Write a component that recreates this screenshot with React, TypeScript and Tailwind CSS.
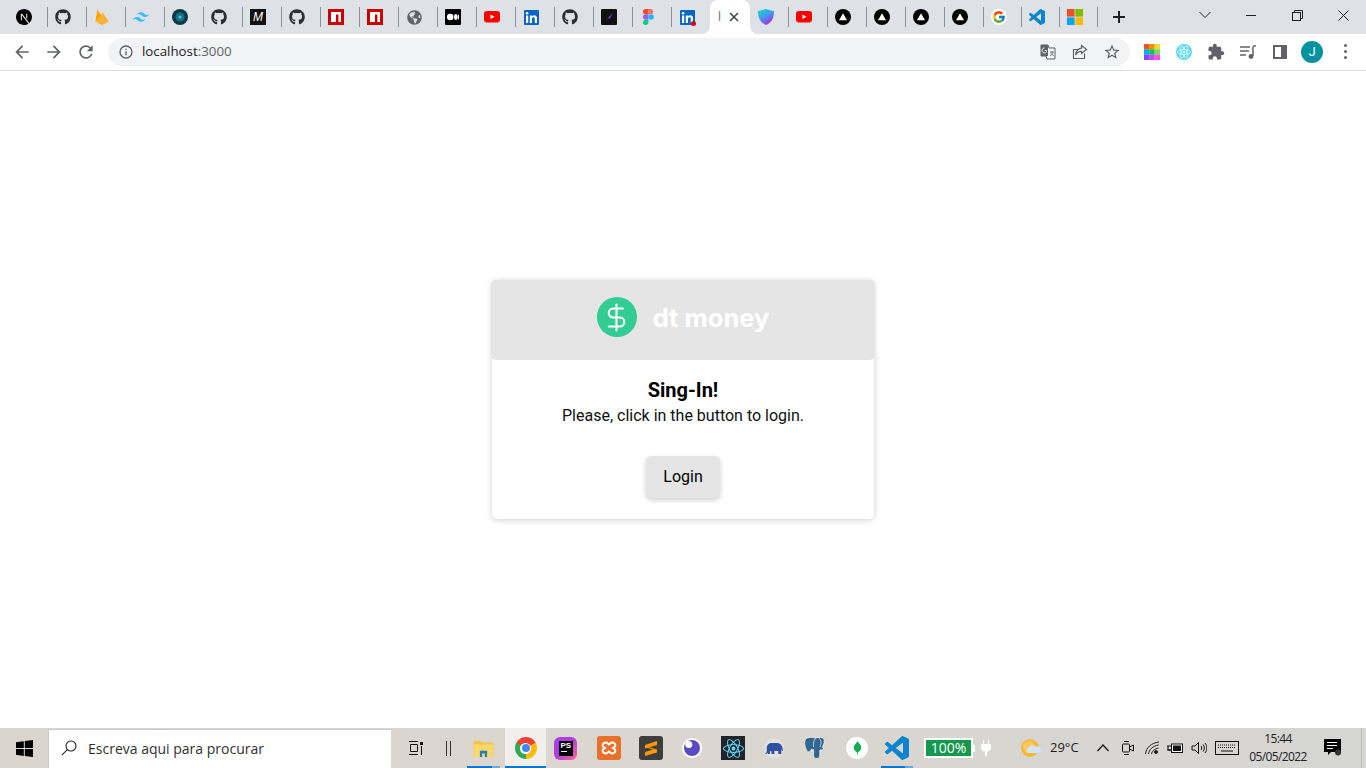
import React from "react";
import { FaGithub, FaGlobeAmericas } from "react-icons/fa";
import { SiNextdotjs, SiTailwindcss, SiReact } from "react-icons/si";
import { FcGoogle } from "react-icons/fc";

const VS = ({ size = 16 }: { size?: number }) => (
  <svg width={size} height={size} viewBox="0 0 24 24" fill="#0d84d0">
    <path d="M23.15 2.587L18.21.21a1.494 1.494 0 0 0-1.705.29l-9.46 8.63-4.12-3.128a.999.999 0 0 0-1.276.057L.327 7.261A1 1 0 0 0 .326 8.74L3.899 12 .326 15.26a1 1 0 0 0 .001 1.479L1.65 17.94a.999.999 0 0 0 1.276.057l4.12-3.128 9.46 8.63a1.492 1.492 0 0 0 1.704.29l4.942-2.377A1.5 1.5 0 0 0 24 20.06V3.939a1.5 1.5 0 0 0-.85-1.352zm-5.146 14.861L10.826 12l7.178-5.448v10.896z" />
  </svg>
);
const Gh = () => <FaGithub size={16} color="#2b2f33" />;
const Npm = () => (
  <svg width="16" height="16" viewBox="0 0 16 16">
    <rect width="16" height="16" fill="#cb0000" />
    <path d="M3 3h10v10h-2.6V5.6H8V13H3z" fill="#fff" />
  </svg>
);
const Tri = () => (
  <svg width="16" height="16" viewBox="0 0 16 16">
    <circle cx="8" cy="8" r="8" fill="#000" />
    <path d="M8 4.2l4 7H4z" fill="#fff" />
  </svg>
);
const Yt = () => (
  <svg width="16" height="12" viewBox="0 0 16 12">
    <rect width="16" height="11.5" rx="3" fill="#f00" />
    <path d="M6.5 3.6l4 2.2-4 2.2z" fill="#fff" />
  </svg>
);
const Li = ({ dot }: { dot?: boolean }) => (
  <span className="relative flex h-4 w-4 items-center justify-center">
    <svg width="15" height="15" viewBox="0 0 15 15">
      <rect width="15" height="15" rx="1" fill="#0a66c2" />
      <rect x="2" y="5.5" width="2.2" height="7.5" fill="#fff" />
      <circle cx="3.1" cy="3.3" r="1.3" fill="#fff" />
      <path d="M5.8 5.5h2.1v1c.5-.8 1.2-1.2 2.2-1.2 1.9 0 2.9 1.1 2.9 3.2V13h-2.2V8.9c0-1-.4-1.6-1.3-1.6S8 8 8 8.9V13H5.8z" fill="#fff" />
    </svg>
    {dot && <span className="absolute right-[-1px] bottom-[-1px] h-[5px] w-[5px] rounded-full bg-[#d9071c]" />}
  </span>
);
const favicons: React.ReactNode[] = [
  <SiNextdotjs size={16} color="#000" />,
  <Gh />,
  <svg width="14" height="16" viewBox="0 0 14 16">
    <path d="M0.500 12.500L2.500 0.500 6 6.500 7.500 3.500 13.500 12.500 7 16z" fill="#ffca28" />
    <path d="M0.500 12.500L2.500 0.500 6 6.500z" fill="#ffa000" />
    <path d="M7.500 3.500L13.500 12.500 7 16 0.500 12.500 6 6.500z" fill="#f9b233" />
  </svg>,
  <SiTailwindcss size={16} color="#38bdf8" />,
  <svg width="16" height="16" viewBox="0 0 16 16">
    <circle cx="8" cy="8" r="8" fill="#0b3a46" />
    <circle cx="8" cy="8" r="4.5" fill="#18708a" />
    <circle cx="8" cy="8" r="1.5" fill="#53c1de" />
  </svg>,
  <Gh />,
  <span className="flex h-4 w-4 items-center justify-center bg-[#111] font-['Liberation_Sans',sans-serif] text-[12px] italic leading-none text-white">M</span>,
  <Gh />,
  <Npm />,
  <Npm />,
  <FaGlobeAmericas size={15} color="#5f6368" />,
  <svg width="16" height="16" viewBox="0 0 16 16">
    <rect width="16" height="16" rx="1" fill="#000" />
    <circle cx="5.2" cy="8" r="3.3" fill="#fff" />
    <ellipse cx="10.8" cy="8" rx="1.7" ry="3" fill="#fff" />
    <ellipse cx="13.4" cy="8" rx=".7" ry="2.7" fill="#fff" />
  </svg>,
  <Yt />,
  <Li />,
  <Gh />,
  <svg width="16" height="16" viewBox="0 0 16 16">
    <rect width="16" height="16" rx="1" fill="#111" />
    <path d="M4.500 12L11.500 4 9.300 9 6.900 9.800z" fill="#7c4fe0" />
  </svg>,
  <svg width="11" height="16" viewBox="0 0 11 16">
    <path d="M0 2.7A2.7 2.7 0 0 1 2.7 0h2.7v5.3H2.7A2.7 2.7 0 0 1 0 2.7z" fill="#f24e1e" />
    <path d="M5.4 0h2.7a2.7 2.7 0 0 1 0 5.3H5.4z" fill="#ff7262" />
    <path d="M0 8a2.7 2.7 0 0 1 2.7-2.7h2.7v5.4H2.7A2.7 2.7 0 0 1 0 8z" fill="#a259ff" />
    <circle cx="8.1" cy="8" r="2.7" fill="#1abcfe" />
    <path d="M0 13.3a2.7 2.7 0 0 1 2.7-2.6h2.7v2.6a2.7 2.7 0 0 1-5.4 0z" fill="#0acf83" />
  </svg>,
  <Li dot />,
];
const after: { n: React.ReactNode; w: number }[] = [
  {
    n: (
      <svg width="16" height="16" viewBox="0 0 16 16">
        <defs>
          <linearGradient id="sh" x1="0" y1="0" x2=".6" y2="1">
            <stop offset="0" stopColor="#20dba0" />
            <stop offset=".45" stopColor="#35a8f0" />
            <stop offset="1" stopColor="#a82de0" />
          </linearGradient>
        </defs>
        <path d="M8 0l8 2.2c0 6-1.6 11-8 13.8C1.6 13.2 0 8.2 0 2.2z" fill="url(#sh)" />
      </svg>
    ),
    w: 38,
  },
  { n: <Yt />, w: 39 },
  { n: <Tri />, w: 39 },
  { n: <Tri />, w: 39 },
  { n: <Tri />, w: 39 },
  { n: <Tri />, w: 39 },
  {
    n: (
      <span className="flex h-4 w-4 items-center justify-center rounded-full bg-white">
        <FcGoogle size={14} />
      </span>
    ),
    w: 38,
  },
  { n: <VS size={16} />, w: 38 },
  {
    n: (
      <svg width="16" height="16" viewBox="0 0 16 16">
        <rect width="7.6" height="7.6" fill="#f25022" />
        <rect x="8.4" width="7.6" height="7.6" fill="#7fba00" />
        <rect y="8.4" width="7.6" height="7.6" fill="#00a4ef" />
        <rect x="8.4" y="8.4" width="7.6" height="7.6" fill="#ffb900" />
      </svg>
    ),
    w: 38,
  },
];

const Tab = ({ children, w = 39 }: { children: React.ReactNode; w?: number }) => (
  <div className="flex h-[34px] shrink-0 items-center pl-2" style={{ width: w }}>
    <span className="flex h-4 w-4 items-center justify-center">{children}</span>
    <span className="mr-[-1px] ml-auto h-5 w-px bg-[#8e9297]" />
  </div>
);

const Mat = ({ d, size = 20, color = "#5f6368" }: { d: string; size?: number; color?: string }) => (
  <svg width={size} height={size} viewBox="0 0 24 24" fill={color}>
    <path d={d} />
  </svg>
);

const Slot = ({ w, children }: { w: number; children: React.ReactNode }) => (
  <div className="flex shrink-0 items-center justify-center" style={{ width: w }}>
    {children}
  </div>
);

const TB = ({ w, line, active, children }: { w: number; line?: boolean; active?: boolean; children: React.ReactNode }) => (
  <div className={`relative flex h-10 shrink-0 items-center justify-center ${active ? "bg-[#f1efec]" : ""}`} style={{ width: w }}>
    {children}
    {line && (
      <span className="absolute right-0 bottom-0 left-0 flex h-[2px]">
        <span className="flex-1 bg-[#0078d4]" />
        {!active && <span className="w-2 bg-[#6fa8d8]" />}
      </span>
    )}
  </div>
);

export default function App() {
  return (
    <div className="flex h-[768px] w-[1366px] flex-col overflow-hidden bg-white font-['Roboto',sans-serif]">
      {/* tab strip */}
      <div className="flex h-[34px] shrink-0 bg-[#dee1e6] pl-2">
        {favicons.map((f, i) => (
          <Tab key={i}>{f}</Tab>
        ))}
        <div className="relative flex h-[34px] w-10 shrink-0 items-center rounded-t-lg bg-white pl-2">
          <span className="w-[3px] font-['Open_Sans',sans-serif] text-[12px] leading-none text-[#5f6368]">l</span>
          <svg className="ml-[8px]" width="10" height="10" viewBox="0 0 10 10" stroke="#3c4043" strokeWidth="1.5">
            <path d="M1 1l8 8M9 1l-8 8" />
          </svg>
          <svg className="absolute bottom-0 left-[-8px]" width="8" height="8" viewBox="0 0 8 8" fill="#fff">
            <path d="M8 0v8H0a8 8 0 0 0 8-8z" />
          </svg>
          <svg className="absolute right-[-8px] bottom-0" width="8" height="8" viewBox="0 0 8 8" fill="#fff">
            <path d="M0 0v8h8a8 8 0 0 1-8-8z" />
          </svg>
        </div>
        {after.map((t, i) => (
          <Tab key={i} w={t.w}>
            {t.n}
          </Tab>
        ))}
        <Slot w={44}>
          <svg width="14" height="14" viewBox="0 0 14 14" stroke="#202124" strokeWidth="2">
            <path d="M7 1v12M1 7h12" />
          </svg>
        </Slot>
        <div className="ml-[41px] flex h-[30px] items-center">
          <Slot w={46}>
            <svg width="12" height="8" viewBox="0 0 12 8" fill="none" stroke="#202124">
              <path d="M.5 1L6 6.5 11.5 1" />
            </svg>
          </Slot>
          <Slot w={46}>
            <span className="h-px w-[10px] bg-[#202124]" />
          </Slot>
          <Slot w={46}>
            <svg width="11" height="11" viewBox="0 0 11 11" fill="none" stroke="#202124">
              <rect x=".5" y="2.5" width="8" height="8" />
              <path d="M2.5 2.5v-2h8v8h-2" />
            </svg>
          </Slot>
          <Slot w={46}>
            <svg width="11" height="11" viewBox="0 0 11 11" stroke="#202124">
              <path d="M.5.5l10 10M10.5.5l-10 10" />
            </svg>
          </Slot>
        </div>
      </div>

      {/* toolbar */}
      <div className="flex h-[37px] shrink-0 items-center border-b border-[#dadce0] bg-white pb-[1px]">
        <div className="ml-[6px] flex">
          <Slot w={32}>
            <Mat d="M20 11H7.83l5.59-5.59L12 4l-8 8 8 8 1.41-1.41L7.83 13H20v-2z" />
          </Slot>
          <Slot w={32}>
            <Mat d="M4 11h12.17l-5.59-5.59L12 4l8 8-8 8-1.41-1.41L16.17 13H4v-2z" />
          </Slot>
          <Slot w={32}>
            <Mat d="M17.65 6.35A7.958 7.958 0 0 0 12 4c-4.42 0-7.99 3.58-7.99 8s3.57 8 7.99 8c3.73 0 6.84-2.55 7.73-6h-2.08A5.99 5.99 0 0 1 12 18c-3.31 0-6-2.69-6-6s2.69-6 6-6c1.66 0 3.14.69 4.22 1.78L13 11h7V4l-2.35 2.35z" />
          </Slot>
        </div>
        <div className="ml-[6px] flex h-7 w-[1022px] items-center rounded-full bg-[#f1f3f4] pl-[10px]">
          <Mat size={16} d="M11 7h2v2h-2zm0 4h2v6h-2zm1-9a10 10 0 1 0 0 20 10 10 0 0 0 0-20zm0 18a8 8 0 1 1 0-16 8 8 0 0 1 0 16z" />
          <span className="ml-[8px] mt-[1px] font-['Open_Sans',sans-serif] text-[13.3px] text-[#202124]">
            localhost<span className="text-[#5f6368]">:3000</span>
          </span>
          <div className="ml-auto flex pr-[2px]">
            <Slot w={32}>
              <svg width="16" height="16" viewBox="0 0 16 16">
                <path d="M1 1h7l1 3h6v11H7l-1-3H1z" fill="none" stroke="#5f6368" />
                <path d="M1 1h7v11H1z" fill="#5f6368" />
                <path d="M4.5 4a2.5 2.5 0 1 0 2 4V6.5H4.6" fill="none" stroke="#f1f3f4" />
                <path d="M10 8h4M12 7v1M13 8c-.3 2-1.500 3-3 3.500M10.800 8.500c.5 1.500 1.500 2.500 3 3" fill="none" stroke="#5f6368" strokeWidth=".8" />
              </svg>
            </Slot>
            <Slot w={32}>
              <svg width="16" height="16" viewBox="0 0 16 16" fill="none" stroke="#5f6368" strokeWidth="1.2">
                <path d="M12.500 9.500v5H1.500V5.500h4" />
                <path d="M9.500 1.500l5 4-5 4V7.300C6.500 7.300 4.800 8.500 3.700 11c.2-4 2-6.300 5.800-6.800z" />
              </svg>
            </Slot>
            <Slot w={32}>
              <Mat size={18} d="M22 9.240l-7.190-.62L12 2 9.190 8.630 2 9.240l5.460 4.730L5.820 21 12 17.270 18.180 21l-1.630-7.030L22 9.240zM12 15.400l-3.760 2.270 1-4.280-3.320-2.880 4.380-.38L12 6.100l1.710 4.040 4.380.38-3.320 2.880 1 4.280L12 15.400z" />
            </Slot>
          </div>
        </div>
        <div className="ml-[6px] flex">
          <Slot w={32}>
            <svg width="16" height="16" viewBox="0 0 16 16">
              <rect width="5.400" height="5.400" fill="#f4511e" />
              <rect x="5.300" width="5.400" height="5.400" fill="#fb8c00" />
              <rect x="10.600" width="5.400" height="5.400" fill="#fdd835" />
              <rect y="5.300" width="5.400" height="5.400" fill="#03a9f4" />
              <rect x="5.300" y="5.300" width="5.400" height="5.400" fill="#00c853" />
              <rect x="10.600" y="5.300" width="5.400" height="5.400" fill="#76e05c" />
              <rect y="10.600" width="5.400" height="5.400" fill="#7c4dff" />
              <rect x="5.300" y="10.600" width="5.400" height="5.400" fill="#c644fc" />
              <rect x="10.600" y="10.600" width="5.400" height="5.400" fill="#ff4df0" />
            </svg>
          </Slot>
          <Slot w={32}>
            <span className="flex h-4 w-4 items-center justify-center rounded-full bg-[#58d8ee]">
              <SiReact size={14} color="#fff" />
            </span>
          </Slot>
          <Slot w={32}>
            <Mat size={18} d="M20.500 11H19V7c0-1.100-.9-2-2-2h-4V3.500C13 2.120 11.880 1 10.500 1S8 2.120 8 3.500V5H4c-1.100 0-1.990.9-1.990 2v3.800H3.500c1.490 0 2.700 1.210 2.700 2.700s-1.210 2.700-2.700 2.700H2V20c0 1.100.9 2 2 2h3.800v-1.500c0-1.490 1.210-2.700 2.700-2.700 1.490 0 2.700 1.210 2.700 2.700V22H17c1.100 0 2-.9 2-2v-4h1.500c1.380 0 2.500-1.120 2.500-2.500S21.880 11 20.500 11z" />
          </Slot>
          <Slot w={32}>
            <svg width="16" height="16" viewBox="0 0 16 16" fill="none" stroke="#5f6368" strokeWidth="1.500">
              <path d="M0 3h10M0 7h9M0 11h6" />
              <path d="M13 2.500V12" />
              <circle cx="11" cy="12.500" r="1.700" fill="#5f6368" />
              <path d="M13 2h3" />
            </svg>
          </Slot>
          <Slot w={32}>
            <svg width="14" height="14" viewBox="0 0 14 14">
              <rect x="1" y="1" width="12" height="12" fill="none" stroke="#5f6368" strokeWidth="2" />
              <rect x="8" y="1" width="5" height="12" fill="#5f6368" />
            </svg>
          </Slot>
          <Slot w={32}>
            <span className="flex h-[22px] w-[22px] items-center justify-center rounded-full bg-[#00939f] text-[13px] text-white">J</span>
          </Slot>
          <Slot w={34}>
            <span className="flex flex-col gap-[3px]">
              <span className="h-[3px] w-[3px] rounded-full bg-[#5f6368]" />
              <span className="h-[3px] w-[3px] rounded-full bg-[#5f6368]" />
              <span className="h-[3px] w-[3px] rounded-full bg-[#5f6368]" />
            </span>
          </Slot>
        </div>
      </div>

      {/* page */}
      <main className="flex flex-1 items-center justify-center">
        <div className="flex w-[382px] flex-col items-center rounded-[5px] bg-white pb-[21px] shadow-[0_1px_6px_rgba(0,0,0,0.2)]">
          <div className="mx-[-1px] flex h-20 w-[384px] items-center justify-center gap-4 rounded-[5px] bg-[#e5e5e5] pb-[6px]">
            <span className="flex h-10 w-10 items-center justify-center rounded-full bg-[#33cc95]">
              <svg width="31" height="31" viewBox="0 0 24 24" fill="none" stroke="#fff" strokeWidth="1.600" strokeLinecap="round" strokeLinejoin="round">
                <path d="M12 2v20" />
                <path d="M17 5H9.500a3.500 3.500 0 0 0 0 7h5a3.500 3.500 0 0 1 0 7H6" />
              </svg>
            </span>
            <span className="pt-px font-['Inter',sans-serif] text-[25.5px] font-bold leading-none text-white">dt money</span>
          </div>
          <h1 className="mt-[18px] text-[20px] font-bold leading-6 text-black">Sing-In!</h1>
          <p className="mt-[2px] text-base leading-6 text-[#111]">Please, click in the button to login.</p>
          <button className="mt-[28px] h-[42px] w-[74px] rounded-[5px] bg-[#e5e5e5] text-base text-black shadow-[0_2px_5px_rgba(0,0,0,0.2)]">Login</button>
        </div>
      </main>

      {/* taskbar */}
      <div className="flex h-10 shrink-0 items-center bg-linear-to-r from-[#dad6ce] via-[#dbd7d0] to-[#d5d5d3] font-['Open_Sans',sans-serif]">
        <Slot w={48}>
          <svg width="17" height="17" viewBox="0 0 17 17" fill="#000">
            <path d="M0 2.300l7.800-1.100v6.900H0zM8.800 1L17 0v8.100H8.800zM0 9h7.800v6.900L0 14.800zM8.800 9H17v8l-8.200-1.100z" />
          </svg>
        </Slot>
        <div className="flex h-[39px] w-[343px] items-center self-end border-t border-l border-[#c9c9c9] bg-white pb-[2px] pl-[12px]">
          <svg width="16" height="16" viewBox="0 0 16 16" fill="none" stroke="#222" strokeWidth="1.100">
            <circle cx="10" cy="6" r="5" />
            <path d="M6.300 9.700L.8 15.200" />
          </svg>
          <span className="ml-[11px] text-[14px] text-[#303030]">Escreva aqui para procurar</span>
        </div>
        <Slot w={50}>
          <svg width="18" height="18" viewBox="0 0 18 18" fill="none" stroke="#111">
            <path d="M2 2.500h9M2 15.500h9M3.500 5.500h7v7h-7zM14.500 7v9" />
            <rect x="13" y="3" width="3" height="3" fill="#111" stroke="none" />
          </svg>
        </Slot>
        <Slot w={14}>
          <span className="h-[15px] w-[5px] border-x border-[#333]" />
        </Slot>
        <div className="ml-[12px] flex">
          <TB w={33} line>
            <svg width="21" height="18" viewBox="0 0 22 20">
              <path d="M0 2h8l2 2h12v16H0z" fill="#f5c445" />
              <path d="M0 6h22v14H0z" fill="#fcd86b" />
              <path d="M7 13h8v7h-2.500v-4h-3v4H7z" fill="#1d7fc4" />
            </svg>
          </TB>
          <span className="w-[5px] shrink-0" />
          <TB w={41} line active>
            <span className="flex h-[22px] w-[22px] items-center justify-center rounded-full bg-[conic-gradient(#ea4335_0deg_60deg,#fbbc05_60deg_180deg,#34a853_180deg_300deg,#ea4335_300deg)]">
              <span className="flex h-[11px] w-[11px] items-center justify-center rounded-full bg-white">
                <span className="h-[8px] w-[8px] rounded-full bg-[#4285f4]" />
              </span>
            </span>
          </TB>
          <TB w={39}>
            <span className="flex h-[23px] w-[23px] items-center justify-center rounded-[6px] bg-linear-to-br from-[#a83df2] via-[#b13cd6] to-[#ff5f8f]">
              <span className="flex h-[15px] w-[14px] flex-col bg-black pl-[2px] font-['Liberation_Sans',sans-serif] text-[8px] font-bold leading-[9px] text-white">
                PS
                <span className="mt-[1px] h-px w-[6px] bg-white" />
              </span>
            </span>
          </TB>
          <TB w={48}>
            <span className="flex h-6 w-6 items-center justify-center rounded-[3px] bg-[#e8702a]">
              <svg width="18" height="16" viewBox="0 0 18 16" fill="none" stroke="#fff" strokeWidth="2">
                <path d="M6 2.500C3 2.500 2 5 3 6.500L5 8 3 9.500C2 11 3 13.500 6 13.500 7.500 13.500 8 12 9 11.500 10 12 10.500 13.500 12 13.500 15 13.500 16 11 15 9.500L13 8 15 6.500C16 5 15 2.500 12 2.500 10.500 2.500 10 4 9 4.500 8 4 7.500 2.500 6 2.500z" />
              </svg>
            </span>
          </TB>
          <TB w={36}>
            <span className="flex h-6 w-6 items-center justify-center rounded-[3px] bg-[#3e3e3e]">
              <svg width="12" height="15" viewBox="0 0 12 15" fill="#ff9800">
                <path d="M12 0v4L0 7.500V4zM0 5l12 3.500v3L0 15v-4l8-2.500L0 6z" />
              </svg>
            </span>
          </TB>
          <TB w={46}>
            <svg width="20" height="20" viewBox="0 0 20 20">
              <circle cx="10" cy="10" r="10" fill="#fff" />
              <circle cx="10" cy="10" r="8" fill="#5b48c2" />
              <circle cx="6.800" cy="6.500" r="3.500" fill="#fff" />
            </svg>
          </TB>
          <TB w={36}>
            <span className="flex h-6 w-6 items-center justify-center bg-[#20232a]">
              <SiReact size={21} color="#61dafb" />
            </span>
          </TB>
          <TB w={46}>
            <svg width="22" height="20" viewBox="0 0 22 20">
              <circle cx="11" cy="10" r="10" fill="#e4e1de" />
              <path d="M2 15c1 .3 1.800-.5 1.800-2V9.500C3.800 7 6 5 9 5h5c3 0 5 2 5.500 5l.5 3h-1l-.7-2.500V16h-3v-3h-4v3H8.500v-2.800H7V16H4.800v-1.200C3.800 16 2.500 16 2 15z" fill="#2f4fa3" />
            </svg>
          </TB>
          <TB w={36}>
            <svg width="23" height="24" viewBox="0 0 24 24">
              <path d="M6 1C2 1 0 4 1 9c.7 3.500 2 7 4 7 1.500 0 2.500-2 3-3 .5.500 1.500.7 2 .7V20c0 2 1.500 3 3.500 3s3-1 3-4v-5c2 .5 4-.5 4-2l-1.500-.5c1-2 2.500-5 2-7.500C21 1 18 1 15.500 1c-1.500 0-2.500.3-3.500.8C10.500 1 8 1 6 1z" fill="#336791" stroke="#fff" strokeWidth=".7" />
              <path d="M12 2c-2 2-2.500 6-2 9M15.500 1.500c2.500 2 3 6 1 9.500" fill="none" stroke="#fff" strokeWidth=".7" />
            </svg>
          </TB>
          <TB w={48}>
            <span className="flex h-[22px] w-[22px] items-center justify-center rounded-full bg-white">
              <svg width="9" height="16" viewBox="0 0 12 18" fill="#13aa52">
                <path d="M6 0c2 3 5 5 5 8.500 0 3-2.500 5-4.300 6l-.3 3H5.500l-.3-3C3.500 13.500 1 11.500 1 8.500 1 5 4.500 3 6 0z" />
              </svg>
            </span>
          </TB>
          <TB w={32} line>
            <VS size={24} />
          </TB>
        </div>
        <div className="ml-[11px] flex h-5 w-[49px] items-center justify-center border-2 border-white bg-[#16994e] text-[14px] leading-none text-white">
          100%
        </div>
        <span className="h-[7px] w-[2px] bg-white" />
        <Slot w={22}>
          <svg width="10" height="16" viewBox="0 0 10 16" fill="#fff">
            <path d="M2 0h1v4h4V0h1v4h2v4c0 2-1.500 3.500-4 3.500V16H4v-4.500C1.500 11.500 0 10 0 8V4h2z" />
          </svg>
        </Slot>
        <div className="ml-[24px] flex items-center">
          <svg width="20" height="20" viewBox="0 0 20 20">
            <circle cx="9" cy="10" r="9" fill="#fbb63d" />
            <circle cx="8" cy="9" r="6" fill="#fdc95c" />
            <path d="M7 15a3 3 0 0 1 1-5.500 4 4 0 0 1 7-.5 3 3 0 0 1 3 6z" fill="#cfe6f6" />
          </svg>
          <span className="ml-[9px] w-[41px] text-[13px] text-[#222]">29°C</span>
        </div>
        <div className="flex items-center">
          <Slot w={24}>
            <svg width="12" height="8" viewBox="0 0 12 8" fill="none" stroke="#111" strokeWidth="1.200">
              <path d="M.5 7L6 1l5.500 6" />
            </svg>
          </Slot>
          <Slot w={26}>
            <svg width="14" height="16" viewBox="0 0 14 16" fill="none" stroke="#111">
              <rect x="1.500" y="4" width="7" height="8" rx="1" />
              <path d="M8.500 7l4-2v6l-4-2M3 1.500h5M3 14.500h5" />
            </svg>
          </Slot>
          <Slot w={22}>
            <svg width="15" height="14" viewBox="0 0 15 14" fill="none" stroke="#222">
              <path d="M.5 13C1 7 6 2 14 1M3.500 13c.5-4 4-8 10-9M6.500 13c.5-2.500 2.500-5 7-6" />
              <circle cx="11" cy="11" r="1.500" fill="#222" />
            </svg>
          </Slot>
          <Slot w={24}>
            <svg width="16" height="11" viewBox="0 0 16 11">
              <rect x="4.500" y="1" width="11" height="8.500" fill="#fff" stroke="#111" />
              <rect x="6" y="2.500" width="8" height="5.500" fill="#111" />
              <path d="M0 3h4M0 7h4M1 3v4h3" fill="none" stroke="#111" />
            </svg>
          </Slot>
          <Slot w={24}>
            <svg width="16" height="14" viewBox="0 0 16 14" fill="none" stroke="#111">
              <path d="M1 5h3l3.500-3.500v11L4 9H1zM10 5c1 1 1 3 0 4M12 3.500c1.800 2 1.800 5 0 7M14 2c2.500 3 2.500 7 0 10" />
            </svg>
          </Slot>
          <Slot w={32}>
            <svg width="24" height="14" viewBox="0 0 24 14" fill="none" stroke="#111">
              <rect x=".5" y=".5" width="23" height="13" />
              <path d="M3 4h18M3 6.500h18" strokeDasharray="1 1" />
              <path d="M6 10h12" />
            </svg>
          </Slot>
        </div>
        <div className="flex w-[70px] flex-col items-center text-[12px] leading-[18px] tracking-[-0.6px] text-[#222]">
          <span>15:44</span>
          <span>05/05/2022</span>
        </div>
        <Slot w={40}>
          <svg width="18" height="18" viewBox="0 0 18 18">
            <path d="M0 0h17v13H7l-3 3v-3H0z" fill="#000" />
            <path d="M3 3.500h10M3 6.500h10M3 9.500h6" stroke="#fff" />
            <circle cx="14" cy="13.500" r="3" fill="#333" />
          </svg>
        </Slot>
        <span className="ml-[8px] h-10 w-px bg-[#bdbdbd]" />
      </div>
    </div>
  );
}
